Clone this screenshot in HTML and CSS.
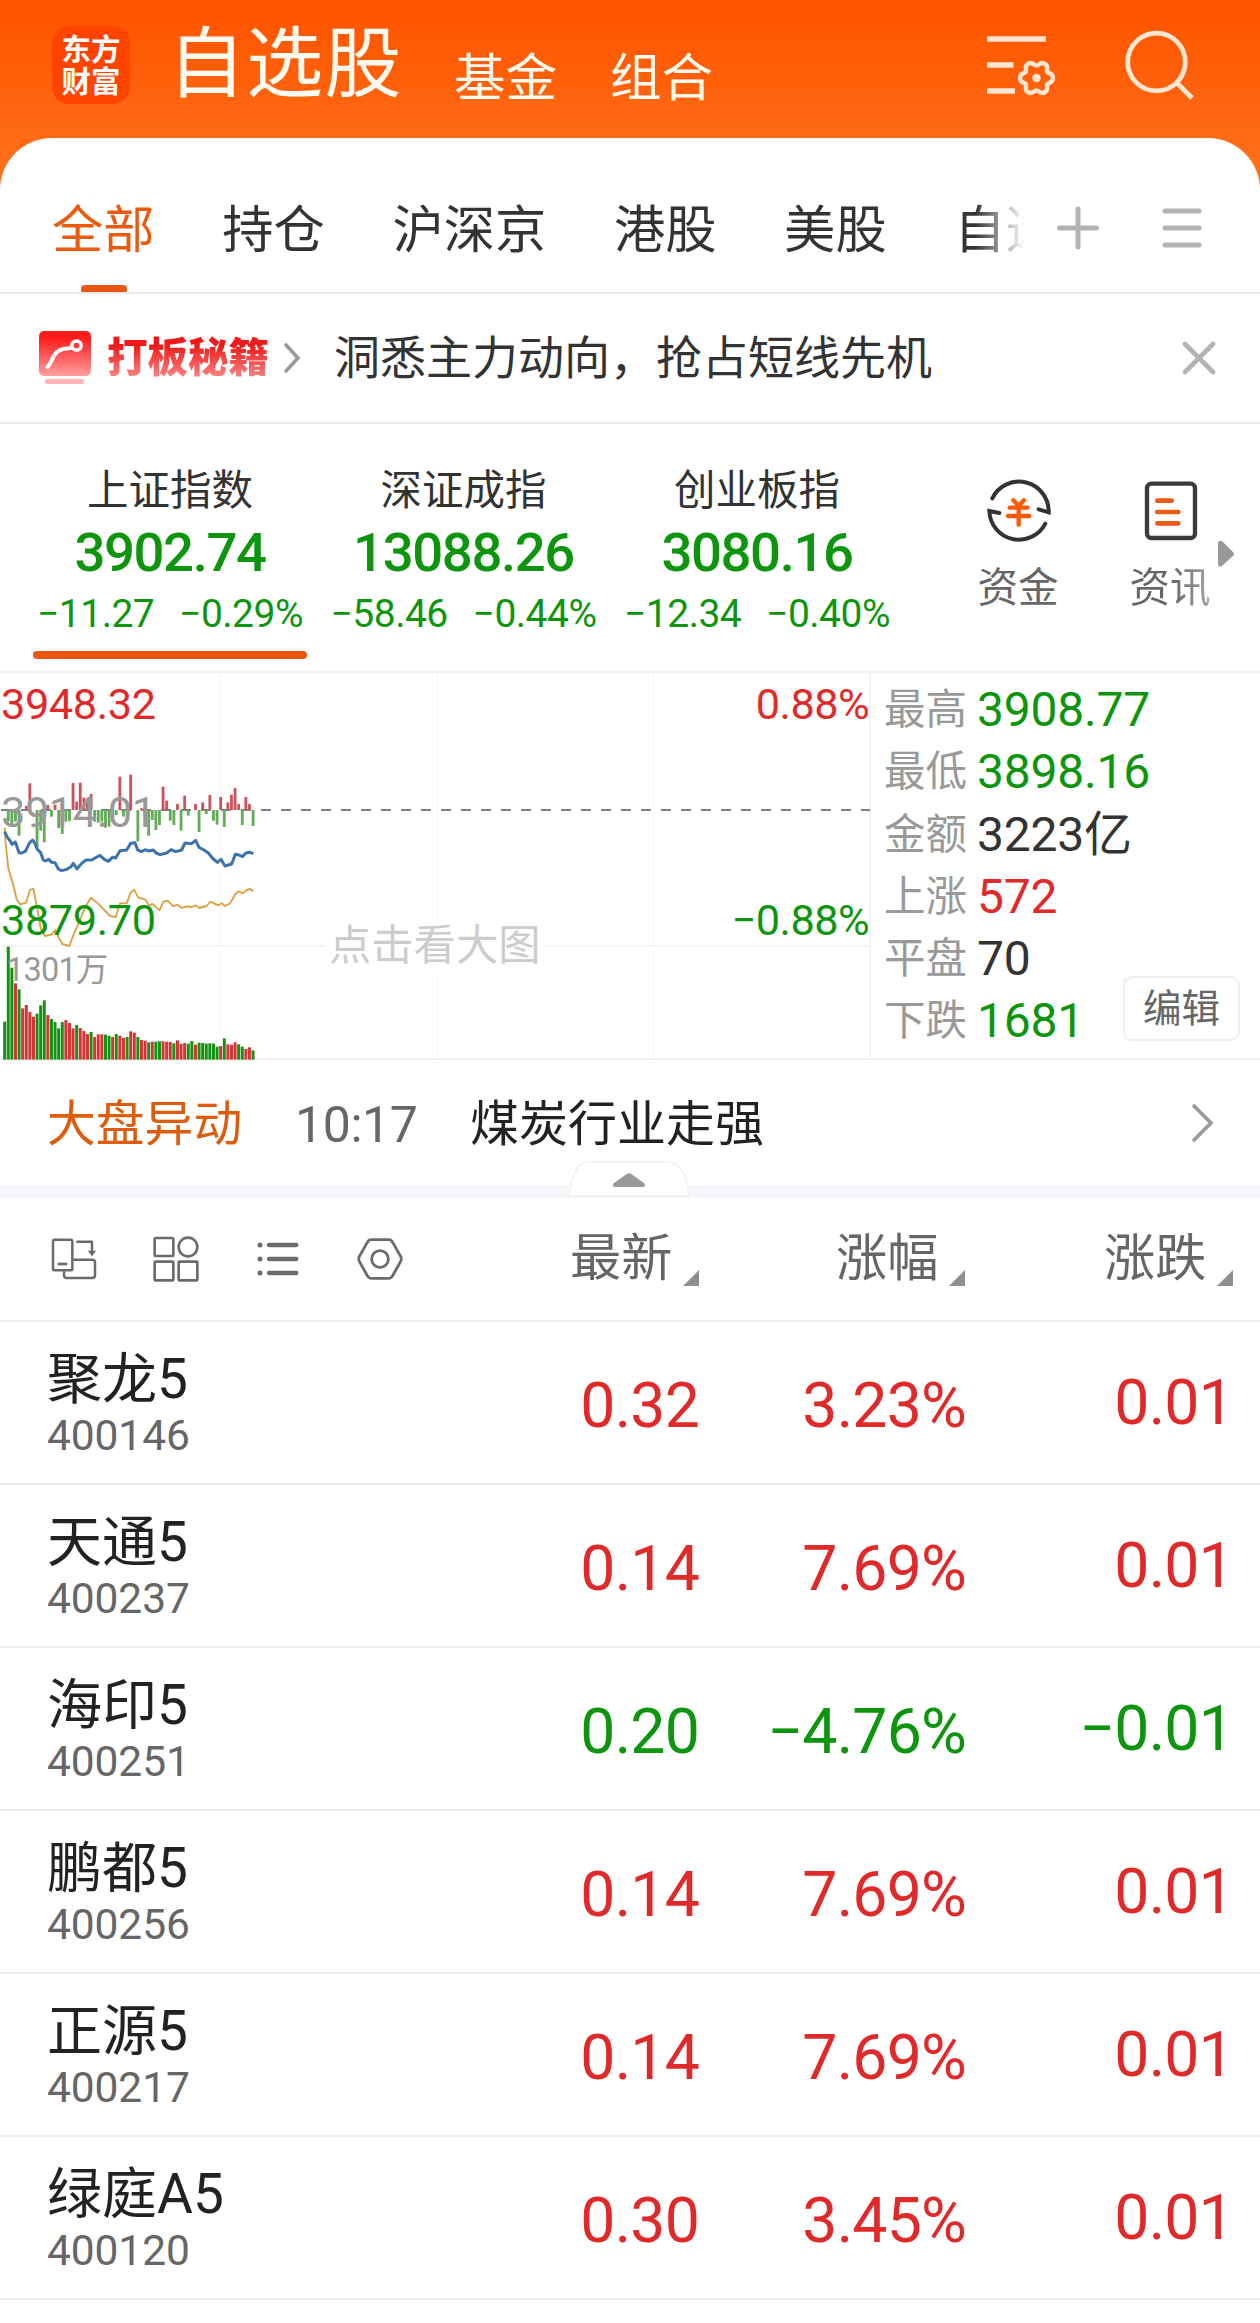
FILE: index.html
```html
<!DOCTYPE html>
<html lang="zh-CN">
<head>
<meta charset="utf-8">
<title>自选股</title>
<link rel="stylesheet" href="styles.css">
</head>
<body>
<div class="app">
  <header class="header">
    <div class="logo"><span>东方</span><span>财富</span></div>
    <h1 class="title">自选股</h1>
    <a class="nav nav-fund">基金</a>
    <a class="nav">组合</a>
    <svg class="ico-settings" width="72" height="64" viewBox="0 0 72 64" fill="none" stroke="#ffe6d2">
      <path d="M2 5H61M2 31H28.500M2 57H30" stroke-width="5.500"/>
      <path transform="translate(51.500 44) scale(.91)" d="M18.100 0Q18.100 3.850 14.470 5.050Q10.830 6.250 11.610 10Q12.380 13.750 9.050 15.670Q5.720 17.590 2.860 15.050Q0 12.500-2.860 15.050Q-5.720 17.590-9.050 15.670Q-12.380 13.750-11.610 10Q-10.830 6.250-14.470 5.050Q-18.100 3.850-18.100 0Q-18.100-3.850-14.470-5.050Q-10.830-6.250-11.610-10Q-12.380-13.750-9.050-15.670Q-5.720-17.590-2.860-15.050Q0-12.500 2.860-15.050Q5.720-17.590 9.050-15.670Q12.380-13.750 11.610-10Q10.830-6.250 14.470-5.050Q18.100-3.850 18.100 0z" stroke-width="4.800" stroke-linejoin="round"/>
      <circle cx="51.500" cy="44" r="4.200" fill="#ffe6d2" stroke="none"/>
    </svg>
    <svg class="ico-search" width="72" height="72" viewBox="0 0 72 72" fill="none" stroke="#ffe6d2" stroke-width="4.800">
      <circle cx="32.500" cy="32" r="28.800"/><path d="M53 53L68 68"/>
    </svg>
  </header>

  <main class="panel">
    <nav class="tabs">
      <div class="tab-list">
        <a class="tab active">全部</a><a class="tab">持仓</a><a class="tab">沪深京</a><a class="tab">港股</a><a class="tab">美股</a><a class="tab">自选</a>
      </div>
      <svg class="ico-plus" width="44" height="46" viewBox="0 0 44 46" stroke="#b3b3b3" stroke-width="5" stroke-linecap="round"><path d="M3.500 23H40.500M22 4V42"/></svg>
      <svg class="ico-menu" width="40" height="40" viewBox="0 0 40 40" stroke="#b3b3b3" stroke-width="5" stroke-linecap="round"><path d="M3 3H37M3 20H37M3 37H37"/></svg>
    </nav>

    <section class="banner">
      <svg width="54" height="54" viewBox="0 0 54 54" fill="none">
        <defs><linearGradient id="red" x1="0" y1="0" x2="0" y2="1"><stop offset=".15" stop-color="#ff1a1c"/><stop offset="1" stop-color="#ffa0a0"/></linearGradient></defs>
        <rect x="1" y="0" width="52" height="45" rx="5" fill="url(#red)"/>
        <path d="M9.500 36C17 29 12 18 33 17" stroke="#fff" stroke-width="4" stroke-linecap="round"/>
        <circle cx="38.500" cy="14.500" r="4.600" stroke="#fff" stroke-width="3.500"/>
        <rect x="7" y="48" width="39" height="5" rx="2.500" fill="#ffb3b3"/>
      </svg>
      <b class="banner-name">打板秘籍</b>
      <svg class="banner-go" width="20" height="32" viewBox="0 0 20 32" fill="none" stroke="#999" stroke-width="3.600" stroke-linecap="round"><path d="M3 3L15 16L3 29"/></svg>
      <span class="banner-text">洞悉主力动向，抢占短线先机</span>
      <svg class="banner-close" width="34" height="34" viewBox="0 0 34 34" stroke="#b3b3b3" stroke-width="4.600" stroke-linecap="round"><path d="M3 3L31 31M31 3L3 31"/></svg>
    </section>

    <section class="indices">
      <div class="index active"><div class="index-name">上证指数</div><div class="index-value">3902.74</div><div class="index-change"><span>−11.27</span><span>−0.29%</span></div></div>
      <div class="index"><div class="index-name">深证成指</div><div class="index-value">13088.26</div><div class="index-change"><span>−58.46</span><span>−0.44%</span></div></div>
      <div class="index"><div class="index-name">创业板指</div><div class="index-value">3080.16</div><div class="index-change"><span>−12.34</span><span>−0.40%</span></div></div>
      <div class="shortcut">
        <svg width="66" height="66" viewBox="78 38 198 198" fill="none" stroke-linecap="round">
          <path d="M97 99A89 89 0 0 1 266 141L236 132M256 175A89 89 0 0 1 88 137L118 143" stroke="#333" stroke-width="12"/>
          <path d="M160 105L176 121L192 105M149 127H203M144 152H208M176 123V178" stroke="#fb5a05" stroke-width="13"/>
        </svg>
        <span>资金</span>
      </div>
      <div class="shortcut news">
        <svg width="66" height="66" viewBox="534 38 198 198" fill="none" stroke-linecap="round">
          <rect x="561" y="55" width="144" height="163" rx="13" stroke="#3b3b3b" stroke-width="13"/>
          <path d="M592 106H635M592 140H655M592 174H655" stroke="#e95b15" stroke-width="14"/>
        </svg>
        <span>资讯</span>
      </div>
      <svg class="more" width="16" height="28" viewBox="0 0 16 28"><path d="M0 3Q1-1 5 2L15 12Q17 14 15 16L5 25Q1 29 0 24z" fill="#999"/></svg>
    </section>

    <section class="market">
      <div class="chart">
        <svg id="chart" width="870" height="388" viewBox="0 6 2610 1164" fill="none">
          <g stroke="#f2f2f2" stroke-width="5">
            <path d="M5 828H2610M5 1168H2610"/>
            <path d="M663 10V1165M1313 10V1165M1961 10V1165" stroke-width="3" stroke-dasharray="3 5" stroke="#e9e9e9"/>
          </g>
          <path d="M3 420H2610" stroke="#808080" stroke-width="6" stroke-dasharray="30 30"/>
          <g id="volume" stroke-width="9"></g>
          <g id="flow" stroke-width="8.500"></g>
          <path stroke="#dda040" stroke-width="5.500" stroke-linejoin="round" d="M14 473L16 510L25 595L40 645L50 688L60 703L78 698L90 660L100 656L110 705L122 775L135 798L155 793L165 781L175 800L187 822L208 828L220 796L240 750L255 712L273 683L300 706L330 738L347 741L360 700H380L392 668L402 659L415 683L435 688L447 706L457 702L479 721L490 695L503 692L520 709L533 704L545 714L560 709L575 711L587 706L598 714L620 708L631 695L655 706L665 700L675 708L690 700L706 672L717 664L728 670L740 660L750 657L760 664"/>
          <path stroke="#3d72ae" stroke-width="9" stroke-linejoin="round" d="M14 485L22 502L30 512L36 523L46 516L57 548L65 549L76 544L89 518L98 510L105 520L112 538L122 548L130 570L136 573L146 568L155 577L165 578L175 597L185 602L200 598L213 590L220 580L231 597L245 580L258 570H275L285 564L300 556L313 568L325 574L337 562L347 564L360 542L380 540L392 520L405 518L413 540L425 545L435 539L447 543L460 540L468 549L480 554L500 549L513 539L527 545L545 540L555 519L575 521L587 511L597 532L612 540L625 549L637 564L652 577L663 568L675 588L695 582L706 553L717 555L727 560L738 549L750 547L760 551"/>
        </svg>
        <span class="lbl high up">3948.32</span>
        <span class="lbl mid">3914.01</span>
        <span class="lbl low down">3879.70</span>
        <span class="lbl high right up">0.88%</span>
        <span class="lbl low right down">−0.88%</span>
        <span class="lbl vol">1301万</span>
        <span class="lbl hint">点击看大图</span>
      </div>
      <dl class="stats">
        <dt>最高</dt><dd class="down">3908.77</dd>
        <dt>最低</dt><dd class="down">3898.16</dd>
        <dt>金额</dt><dd>3223亿</dd>
        <dt>上涨</dt><dd class="up">572</dd>
        <dt>平盘</dt><dd>70</dd>
        <dt>下跌</dt><dd class="down">1681</dd>
      </dl>
      <button class="edit">编辑</button>
    </section>

    <section class="alert">
      <span class="alert-tag">大盘异动</span><span class="alert-time">10:17</span><span class="alert-text">煤炭行业走强</span>
      <svg class="alert-go" width="24" height="40" viewBox="0 0 24 40" fill="none" stroke="#999" stroke-width="3.600" stroke-linecap="round"><path d="M4 3L21 20L4 37"/></svg>
      <svg class="fold" width="124" height="36" viewBox="0 0 124 36"><path d="M2 35Q4 18 8 11Q12 1 24 1H99Q111 1 116 11Q120 18 122 35z" fill="#fff" stroke="#f0f0f0" stroke-width="1.500"/><path d="M47 26Q45 24 47 22L59 13.500Q62 11 65 13.500L77 22Q79 24 77 26z" fill="#999"/></svg>
    </section>

    <section class="list-head">
      <svg width="48" height="48" viewBox="60 45 144 144" fill="none" stroke="#6b6b6b" stroke-width="7.500" stroke-linejoin="round">
        <rect x="69" y="59" width="58" height="92" rx="5"/><path d="M83 132H112" stroke-width="8"/><path d="M139 65H186V95"/><path d="M173 92H198L186 109z" fill="#6b6b6b" stroke="none"/><path d="M130 119H187Q195 119 195 127V166Q195 174 187 174H111Q102 174 102 166V154"/>
      </svg>
      <svg width="48" height="48" viewBox="366 45 144 144" fill="none" stroke="#6b6b6b" stroke-width="8">
        <rect x="374" y="54" width="56" height="54" rx="4"/><circle cx="474" cy="81" r="28"/><rect x="374" y="125" width="56" height="56" rx="4"/><rect x="446" y="125" width="56" height="56" rx="4"/>
      </svg>
      <svg width="48" height="48" viewBox="672 45 144 144" fill="none" stroke="#6b6b6b" stroke-width="13" stroke-linecap="round">
        <path d="M717 75H799M717 117H799M717 159H799"/><path d="M690 75V75.100M690 117V117.100M690 159V159.100" stroke-width="15"/>
      </svg>
      <svg width="48" height="48" viewBox="978 45 144 144" fill="none" stroke="#6b6b6b" stroke-width="8.500" stroke-linejoin="round">
        <path d="M1024 59H1076Q1084 59 1088 67L1112 109Q1115 117 1112 124L1088 167Q1084 175 1076 175H1024Q1016 175 1012 167L988 124Q985 117 988 109L1012 67Q1016 59 1024 59z"/><circle cx="1050" cy="117" r="25"/>
      </svg>
      <span class="col c1">最新<i></i></span><span class="col c2">涨幅<i></i></span><span class="col c3">涨跌<i></i></span>
    </section>

    <section class="rows">
      <div class="row up"><div class="stock"><b>聚龙5</b><small>400146</small></div><span>0.32</span><span>3.23%</span><span class="chg">0.01</span></div>
      <div class="row up"><div class="stock"><b>天通5</b><small>400237</small></div><span>0.14</span><span>7.69%</span><span class="chg">0.01</span></div>
      <div class="row down"><div class="stock"><b>海印5</b><small>400251</small></div><span>0.20</span><span>−4.76%</span><span class="chg">−0.01</span></div>
      <div class="row up"><div class="stock"><b>鹏都5</b><small>400256</small></div><span>0.14</span><span>7.69%</span><span class="chg">0.01</span></div>
      <div class="row up"><div class="stock"><b>正源5</b><small>400217</small></div><span>0.14</span><span>7.69%</span><span class="chg">0.01</span></div>
      <div class="row up"><div class="stock"><b>绿庭A5</b><small>400120</small></div><span>0.30</span><span>3.45%</span><span class="chg">0.01</span></div>
    </section>
  </main>
</div>
<script src="chart.js"></script>
</body>
</html>
```
FILE: styles.css
```css
* { box-sizing: border-box; margin: 0; padding: 0; }
body {
  background: #fff;
  color: #333;
  font-family: Roboto, "Noto Sans CJK SC", sans-serif;
  font-weight: 400;
  line-height: 1;
}
svg { display: block; flex: none; }
.app {
  width: 1260px;
  height: 2323px;
  overflow: hidden;
  background: linear-gradient(#ff5500 0, #ff5500 16px, #ff7019 170px, #ff7019 200px);
}
.up { color: #e02a2a; }
.down { color: #0d960d; }

/* Header */
.header { display: flex; align-items: flex-start; height: 138px; padding-left: 52px; color: #fffaf0; }
.logo {
  display: flex; flex-direction: column; align-items: center;
  width: 78px; height: 78px; margin-top: 26px; padding-top: 8px;
  border-radius: 17px; background: #ff4400; color: #fff;
  font-size: 29.500px; font-weight: 700; line-height: 32px;
}
.title { width: 286px; margin: 27px 0 0 38px; font-size: 77px; font-weight: 400; letter-spacing: 1.300px; line-height: 76px; }
.nav { width: 156px; margin-top: 53px; font-size: 51.500px; line-height: 52px; }
.ico-settings { margin: 34px 0 0 219px; }
.ico-search { margin: 30px 0 0 67px; }

/* Panel and tabs */
.panel { height: 2185px; border-radius: 52px 52px 0 0; background: #fff; }
.tabs { position: relative; display: flex; height: 156px; border-bottom: 2px solid #e8e8e8; }
.tab-list {
  display: flex; gap: 67.600px; width: 1025px; padding: 67px 0 0 52px; overflow: hidden;
  -webkit-mask-image: linear-gradient(90deg, #000 975px, transparent 1025px);
  mask-image: linear-gradient(90deg, #000 975px, transparent 1025px);
}
.tab { flex: none; font-size: 51.300px; line-height: 52px; }
.tab.active { position: relative; color: #ea5b10; }
.tab.active::after {
  content: ""; position: absolute; left: 29px; top: 80px;
  width: 46px; height: 8px; border-radius: 4px; background: #ea5510;
}
.ico-plus { margin: 67px 0 0 31px; }
.ico-menu { margin: 70px 0 0 62px; }

/* Promotion banner */
.banner { display: flex; align-items: center; height: 130px; padding-left: 38px; border-bottom: 2px solid #e8e8e8; }
.banner-name {
  margin-left: 15px; font-size: 40.500px; font-weight: 900; line-height: 52px;
  background: linear-gradient(#f01818 25%, #fa8a8a 90%); -webkit-background-clip: text; background-clip: text; color: transparent;
}
.banner-go { margin-left: 14px; }
.banner-text { margin-left: 31px; font-size: 46px; line-height: 52px; white-space: nowrap; }
.banner-close { margin-left: auto; margin-right: 44px; }

/* Indices */
.indices { position: relative; display: flex; height: 249px; padding-left: 33px; border-bottom: 2px solid #f4f4f4; }
.index { width: 274px; margin-right: 19.500px; padding-top: 45px; text-align: center; }
.index.active::after { content: ""; display: block; height: 8px; margin-top: 15px; border-radius: 4px; background: #ea5510; }
.index-name { font-size: 41.500px; line-height: 44px; }
.index-value { margin: 11px -20px 0; color: #0d960d; font-size: 54.500px; font-weight: 500; letter-spacing: -1.400px; line-height: 56px; }
.index-change { display: flex; justify-content: space-between; margin: 12px 4px 0; color: #0d960d; font-size: 39px; line-height: 44px; white-space: nowrap; }
.index-change span { letter-spacing: -.5px; }
.shortcut { width: 82px; margin-left: 64px; padding-top: 54px; color: #666; font-size: 40.500px; line-height: 44px; }
.shortcut svg { margin: 0 auto 22px; }
.shortcut.news { margin-left: 70px; }
.news span { background: linear-gradient(90deg, #666 50%, #a5a5a5); -webkit-background-clip: text; background-clip: text; color: transparent; }
.more { position: absolute; left: 1218px; top: 116px; }
.index + .shortcut { margin-left: 64px; }

/* Intraday chart and statistics */
.market { position: relative; display: flex; height: 388px; border-bottom: 2px solid #f2f2f2; margin-top: -1px; }
.chart { position: relative; width: 871px; height: 388px; border-right: 2px solid #f4f4f4; }
.lbl { position: absolute; left: 1px; font-size: 43.300px; line-height: 44px; letter-spacing: -.4px; white-space: nowrap; }
.lbl.high { top: 11px; }
.lbl.mid { top: 119px; color: #999; }
.lbl.low { top: 227px; }
.lbl.right { left: auto; right: 0; letter-spacing: -.6px; }
.lbl.vol { left: 6px; top: 278px; color: #999; font-size: 32.500px; line-height: 40px; letter-spacing: -.8px; }
.lbl.hint { left: 325px; top: 250px; padding: 0 4px; background: #fff; color: #ccc; font-size: 42.300px; line-height: 48px; letter-spacing: 0; }
.stats { display: grid; grid-template-columns: 93px auto; grid-auto-rows: 62.300px; align-content: start; padding: 7px 0 0 13px; line-height: 62px; }
.stats dt { color: #999; font-size: 41.500px; }
.stats dd { font-size: 48px; letter-spacing: -.2px; }
.edit {
  position: absolute; left: 1123px; top: 304px; width: 117px; height: 65px;
  border: 2px solid #eee; border-radius: 9px; background: #fff; color: #666;
  font: 38.500px/60px Roboto, "Noto Sans CJK SC", sans-serif;
}

/* Market alert */
.alert { position: relative; display: flex; height: 138px; padding: 0 46px 0 47px; border-bottom: 13px solid #f5f7fa; line-height: 130px; }
.alert-tag { width: 248px; color: #df5c0d; font-size: 48.800px; }
.alert-time { width: 175px; color: #666; font-size: 50px; letter-spacing: -.4px; }
.alert-text { color: #222; font-size: 49px; }
.alert-go { margin: 43px 0 0 auto; }
.fold { position: absolute; left: 567px; top: 101px; }

/* List header */
.list-head { position: relative; display: flex; gap: 54px; height: 124px; padding: 37px 0 0 50px; border-bottom: 2px solid #ededed; }
.col { position: absolute; top: 35px; color: #666; font-size: 51.200px; line-height: 52px; }
.col i { position: absolute; left: 113px; top: 37px; width: 16px; height: 16px; background: #8e8e93; clip-path: polygon(100% 0, 100% 100%, 0 100%); }
.c1 { left: 570px; }
.c2 { left: 836px; }
.c3 { left: 1104px; }

/* Stock rows */
.row { display: grid; grid-template-columns: 402px 250px 267px 267px; height: 163px; padding-left: 47px; border-bottom: 2px solid #ededed; font-size: 62.500px; letter-spacing: -.8px; }
.row > span { padding-top: 52px; text-align: right; line-height: 64px; }
.row > .chg { padding-top: 49px; }
.stock { display: flex; flex-direction: column; padding-top: 28px; color: #222; letter-spacing: 0; }
.stock b { font-size: 55px; font-weight: 400; line-height: 58px; }
.stock small { margin-top: 6px; color: #666; font-size: 42.500px; line-height: 44px; letter-spacing: -.1px; }
```
FILE: chart.js
```js
// Per-minute turnover: bar top (baseline 1169) and direction.
const volume = "1055G 830G 893G 940R 958G 1015R 1005R 1026R 1040R 1031G 1006G 991G 1035R 1047G 1056G 1075G 1056G 1050R 1059R 1075R 1065G 1074R 1083R 1092R 1086G 1101R 1093R 1093R 1094G 1097G 1101R 1092G 1097R 1104R 1101G 1084R 1088R 1101G 1110R 1112R 1117G 1115R 1115G 1114G 1114R 1115R 1116R 1120G 1111R 1122R 1119R 1121G 1113G 1124R 1118G 1119G 1121G 1120G 1121G 1130G 1128R 1105G 1123R 1124R 1117R 1123G 1130G 1137R 1132R 1141G".split(" ");
// Momentum bars: tip of each bar, measured from the 420 axis.
const flow = [420, 455, 470, 455, 497, 420, 408, 340, 420, 530, 482, 517, 405, 440, 404, 475, 492, 455, 453, 339, 395, 338, 383, 385, 372, 455, 458, 455, 473, 470, 455, 435, 320, 440, 420, 314, 420, 514, 415, 440, 497, 450, 480, 465, 350, 392, 452, 465, 402, 482, 377, 437, 420, 402, 486, 397, 432, 375, 452, 464, 381, 471, 397, 374, 354, 402, 465, 381, 402, 468];
const x = i => 14 + i * 10.8;
const bar = (i, from, to, color) => `<path d="M${x(i)} ${from}V${to}" stroke="${color}"/>`;

document.getElementById("volume").innerHTML = volume
  .map((v, i) => bar(i, 1169, parseInt(v, 10), v.endsWith("G") ? "#129412" : "#d73436")).join("");
document.getElementById("flow").innerHTML = flow
  .map((v, i) => v === 420 ? "" : bar(i, 420, v, v > 420 ? "#62ad55" : "#c9555a")).join("");
```
